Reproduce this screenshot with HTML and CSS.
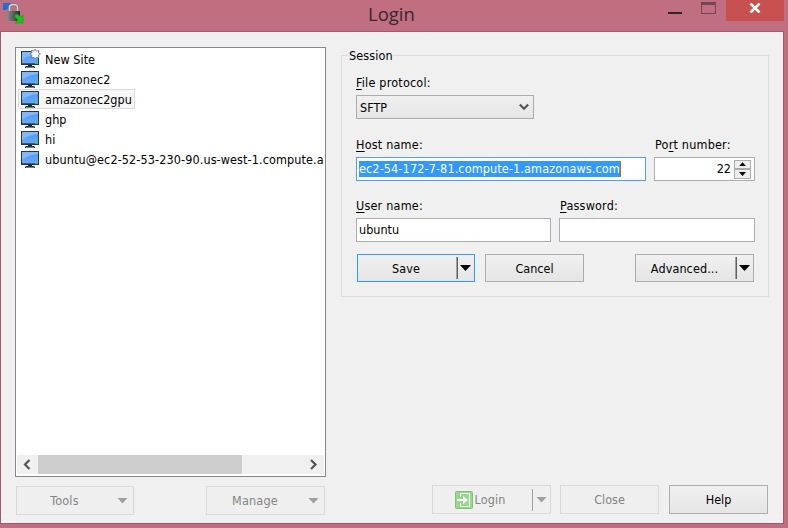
FILE: index.html
```html
<!DOCTYPE html>
<html lang="en">
<head>
<meta charset="utf-8">
<title>Login</title>
<link rel="stylesheet" href="styles.css">
</head>
<body>
<svg class="defs" width="0" height="0">
  <defs>
    <linearGradient id="screen" x1="0" y1="0" x2="0" y2="1"><stop offset="0" stop-color="#4f98f4"/><stop offset="1" stop-color="#62a9fb"/></linearGradient>
    <linearGradient id="lock" x1="0" y1="0" x2="1" y2="0"><stop offset="0" stop-color="#8b8b8b"/><stop offset="1" stop-color="#2c2c2c"/></linearGradient>
    <symbol id="monitor" viewBox="0 0 18 18">
      <rect width="18" height="14" fill="#28333f"/>
      <rect x="1" y="1" width="16" height="11" fill="url(#screen)"/>
      <path d="M1 1h16v2Q7 4 1 9z" fill="#82b8f8"/>
      <rect x="1" y="12" width="16" height="1" fill="#465668"/>
      <rect x="14" y="12" width="3" height="1" fill="#25d321"/>
      <rect x="7" y="14" width="4" height="2" fill="#1c242d"/>
      <path d="M5 15h8l1 1v1H4v-1z" fill="#28333f"/>
      <rect x="5" y="16" width="8" height="1" fill="#668098"/>
    </symbol>
  </defs>
</svg>
<header class="titlebar">
  <svg class="app-icon" width="22" height="22" viewBox="0 0 22 22">
    <path d="M0 1h8v3L3 8H0z" fill="#1c6ce6"/>
    <path d="M6.500 10V5.500q0-3 4-3t4 3V10" fill="none" stroke="#777" stroke-width="3"/>
    <path d="M6.500 10V5.500q0-3 4-3t4 3V10" fill="none" stroke="#d4d4d4" stroke-width="1.500"/>
    <rect x="4" y="9" width="13" height="10" fill="url(#lock)"/>
    <path d="M12 13l2-1 4 3 2-2v8h-8l3-3-3-3z" fill="#10cd13" stroke="#10931a" stroke-width=".5"/>
  </svg>
  <h1>Login</h1>
  <div class="controls">
    <span class="minimize"></span>
    <span class="maximize"></span>
    <span class="close-window"><svg width="12" height="10" viewBox="0 0 12 10"><path d="M1.500 .5l9 9M10.500 .5l-9 9" stroke="#fff" stroke-width="2.600"/></svg></span>
  </div>
</header>
<main class="dialog">
  <section class="left">
    <div class="list">
      <ul>
        <li><svg class="icon" width="20" height="20" viewBox="0 0 20 20"><use href="#monitor" y="2" width="18" height="18"/><path d="M14 0l1.500 2.200L18 1.500l-.5 2.500L19.500 5l-2 1.300.3 2.700-2.500-.6L14 10l-1-1.700-2.500.5.3-2.600L9 5l2-1.300-.5-2.300 2.500.6z" fill="#f4f9ff" stroke="#63758b" stroke-width=".8"/></svg><span>New Site</span></li>
        <li><svg class="icon" width="20" height="20" viewBox="0 0 20 20"><use href="#monitor" y="2" width="18" height="18"/></svg><span>amazonec2</span></li>
        <li class="selected"><svg class="icon" width="20" height="20" viewBox="0 0 20 20"><use href="#monitor" y="2" width="18" height="18"/></svg><span>amazonec2gpu</span></li>
        <li><svg class="icon" width="20" height="20" viewBox="0 0 20 20"><use href="#monitor" y="2" width="18" height="18"/></svg><span>ghp</span></li>
        <li><svg class="icon" width="20" height="20" viewBox="0 0 20 20"><use href="#monitor" y="2" width="18" height="18"/></svg><span>hi</span></li>
        <li><svg class="icon" width="20" height="20" viewBox="0 0 20 20"><use href="#monitor" y="2" width="18" height="18"/></svg><span class="long">ubuntu@ec2-52-53-230-90.us-west-1.compute.a</span></li>
      </ul>
      <div class="scrollbar">
        <svg width="21" height="19" viewBox="0 0 21 19"><path d="M12.500 5L8 9.500l4.500 4.500" fill="none" stroke="#555" stroke-width="2.200"/></svg>
        <div class="thumb"></div>
        <svg class="right-arrow" width="21" height="19" viewBox="0 0 21 19"><path d="M8 5l4.500 4.500L8 14" fill="none" stroke="#555" stroke-width="2.200"/></svg>
      </div>
    </div>
    <div class="list-buttons">
      <button class="btn menu tools" disabled><span class="label">Tools</span><span class="arrow"></span></button>
      <button class="btn menu manage" disabled><span class="label">Manage</span><span class="arrow"></span></button>
    </div>
  </section>
  <section class="right">
    <fieldset class="session">
      <legend>Session</legend>
      <div class="label-row protocol-label"><u>F</u>ile protocol:</div>
      <div class="select"><span>SFTP</span><svg width="10" height="8" viewBox="0 0 10 8"><path d="M.8 1.500L5 5.700l4.200-4.200" fill="none" stroke="#555" stroke-width="2.200"/></svg></div>
      <div class="fields host-row">
        <div><div class="label-row"><u>H</u>ost name:</div><div class="input focused"><span class="selection">ec2-54-172-7-81.compute-1.amazonaws.com</span></div></div>
        <div><div class="label-row port-label">Po<u>r</u>t number:</div><div class="input port"><span>22</span><div class="spinner"><i class="up"></i><i class="down"></i></div></div></div>
      </div>
      <div class="fields user-row">
        <div><div class="label-row"><u>U</u>ser name:</div><div class="input"><span>ubuntu</span></div></div>
        <div><div class="label-row pass-label"><u>P</u>assword:</div><div class="input"></div></div>
      </div>
      <div class="actions">
        <button class="btn split primary"><span class="label">Save</span><span class="rule"></span><span class="arrow"></span></button>
        <button class="btn"><span class="label">Cancel</span></button>
        <button class="btn split advanced"><span class="label">Advanced...</span><span class="rule"></span><span class="arrow"></span></button>
      </div>
    </fieldset>
    <div class="footer">
      <button class="btn split login" disabled><span class="label"><svg width="18" height="18" viewBox="0 0 18 18"><rect x=".5" y=".5" width="17" height="17" rx="1" fill="#96d88e" stroke="#7fc277"/><path d="M5.500 6V2.500h9v13h-9V12" fill="none" stroke="#f2f8ef" stroke-width="1.200"/><path d="M2 8h6V5l5 4-5 4v-3H2z" fill="#fff"/></svg>Login</span><span class="rule"></span><span class="arrow"></span></button>
      <button class="btn close" disabled><span class="label">Close</span></button>
      <button class="btn help"><span class="label">Help</span></button>
    </div>
  </section>
</main>
</body>
</html>
```
FILE: styles.css
```css
* { box-sizing: border-box; }
body {
  margin: 0;
  width: 788px;
  height: 528px;
  overflow: hidden;
  background: #c06e80;
  color: #000;
  font: 12.5px/16px "DejaVu Sans Condensed", "DejaVu Sans", sans-serif;
}
svg { display: block; flex: none; }
.defs { position: absolute; }

.titlebar { display: flex; height: 31px; padding-left: 3px; }
.app-icon { margin-top: 2px; }
h1 {
  margin: 0;
  width: 343px;
  text-indent: 343px;
  white-space: nowrap;
  font: 18.5px/27px "Open Sans", sans-serif;
  color: #36292d;
}
.controls { display: flex; margin-left: auto; margin-right: 4px; }
.minimize { width: 14px; height: 2px; margin: 12px 19px 0 0; background: #292728; }
.maximize { width: 15px; height: 12px; margin: 2px 10px 0 0; border: 1px solid #744650; border-top-width: 3px; }
.close-window { width: 58px; height: 21px; padding: 3px 0 0 23px; background: #c75050; }

.dialog {
  display: flex;
  width: 784px;
  height: 493px;
  padding: 15px 14px 0;
  border: 1px solid #a5566a;
  background: #f0f0f0;
}
.left { width: 311px; }
.list {
  display: flex;
  flex-direction: column;
  justify-content: space-between;
  height: 430px;
  padding: 1px;
  border: 1px solid #828790;
  background: #fff;
}
ul { margin: 0; padding: 0 0 0 1px; list-style: none; }
li { display: flex; align-items: center; width: fit-content; height: 20px; padding: 0 2px; border: 1px solid transparent; white-space: nowrap; letter-spacing: 0.05px; }
li span { margin-left: 4px; padding-top: 1px; }
li .long { letter-spacing: 0.11px; }
.selected { width: 117px; border-color: #dadada; background: #f7f7f7; }
.scrollbar { display: flex; height: 19px; margin-bottom: 1px; background: #f0f0f0; }
.thumb { width: 204px; background: #cdcdcd; }
.right-arrow { margin-left: auto; }

.list-buttons { display: flex; justify-content: space-between; padding: 9px 1px 0; }

.btn {
  display: flex;
  align-items: center;
  width: 99px;
  height: 28px;
  padding: 0;
  border: 1px solid #acacac;
  background: linear-gradient(#f0f0f0, #e5e5e5);
  color: #000;
  font: inherit;
}
.btn:disabled { border-color: #d9d9d9; background: #efefef; color: #838383; }
.label { display: flex; flex: 1; align-items: center; justify-content: center; padding-top: 1px; }
.arrow { width: 11px; height: 6px; background: currentColor; clip-path: polygon(0 0, 100% 0, 50% 100%); }
.split { width: 119px; }
.split .label { padding-right: 2px; letter-spacing: 0.1px; }
.rule { width: 2px; height: 22px; margin-right: 2px; border-left: 1px solid #a0a0a0; background: #606060; }
.split .arrow { margin-right: 3px; }
.split.primary { width: 118px; }
.primary { border-color: #3399ff; }
.menu { width: 118px; height: 29px; }
.menu .arrow { margin-right: 5px; background: #a0a0a0; }
.menu .label { padding-right: 5px; letter-spacing: 0.2px; }
.manage { width: 119px; }

.right { width: 428px; margin-left: 15px; }
.session { height: 250px; margin: 0; padding: 12px 13px 0 14px; border: 1px solid #dcdcdc; }
legend { height: 16px; margin-left: -8px; padding: 1px 0 0 1px; letter-spacing: 0.1px; }
.label-row { height: 20px; letter-spacing: 0.2px; }
u { text-underline-offset: 2px; text-decoration-thickness: 1px; }
.select {
  display: flex;
  align-items: center;
  justify-content: space-between;
  width: 178px;
  height: 24px;
  padding: 0 4px 0 3px;
  border: 1px solid #acacac;
  background: linear-gradient(#f0f0f0, #e5e5e5);
}
.select span { padding-top: 2px; }
.fields { display: grid; gap: 8px; width: 399px; }
.host-row { grid-template-columns: 290px 101px; margin-top: 18px; }
.user-row { grid-template-columns: 195px 196px; margin-top: 17px; }
.input { display: flex; align-items: center; height: 24px; padding: 0 2px; border: 1px solid #abadb3; background: #fff; }
.focused { border-color: #569de5; }
.selection { height: 16px; border-right: 1px solid #cc6600; background: #3399ff; color: #fff; white-space: nowrap; letter-spacing: 0.13px; }
.port { justify-content: flex-end; }
.port-label, .pass-label { padding-left: 1px; }
.spinner { display: flex; flex-direction: column; width: 18px; height: 19px; margin-left: 3px; padding-right: 1px; }
.spinner i { display: flex; flex: 1; align-items: center; justify-content: center; border: 1px solid #acacac; background: #eee; }
.spinner i::after { content: ""; width: 7px; height: 4px; background: #000; clip-path: polygon(50% 0, 100% 100%, 0 100%); }
.spinner .down::after { transform: scaleY(-1); }
.actions { display: flex; margin: 12px 0 0 1px; }
.primary { margin-right: 10px; }
.advanced { margin-left: 51px; }

.footer { display: flex; margin-top: 188px; padding-left: 91px; }
.footer .btn { height: 29px; }
.footer .label { padding-top: 0; }
.footer .close { margin: 0 10px 0 9px; }
.login .label { padding-right: 5px; }
.login svg { margin-right: 2px; }
.login .rule { width: 1px; border-color: #a0a0a0; margin-right: 3px; }
.login .arrow { background: #a0a0a0; }
```
